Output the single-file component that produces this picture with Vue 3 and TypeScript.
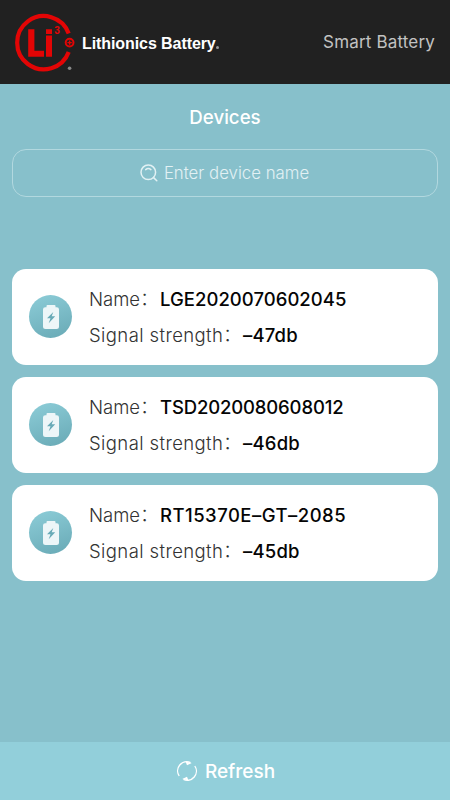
<script setup lang="ts">
import { ref, computed } from 'vue'

interface Device {
  name: string
  signal: string
  tracking: string
}

const query = ref('')
const devices = ref<Device[]>([
  { name: 'LGE2020070602045', signal: '–47db', tracking: '0.03px' },
  { name: 'TSD2020080608012', signal: '–46db', tracking: '-0.15px' },
  { name: 'RT15370E–GT–2085', signal: '–45db', tracking: '0.48px' },
])
const visible = computed(() =>
  devices.value.filter((d) => d.name.toLowerCase().includes(query.value.toLowerCase())),
)
</script>

<template>
  <div class="screen">
    <header class="topbar">
      <svg class="logo" width="64" height="64" viewBox="0 0 64 64">
        <path d="M53.7 20.4A26.6 26.6 0 1 0 53.7 39" fill="none" stroke="#e30505" stroke-width="4.2" />
        <path d="M13.2 16.2h6.2v21.6H29v6H13.2z" fill="#e30505" />
        <path d="M31 16.2h6v4.8h-6zM31 22.6h6v21.2h-6z" fill="#e30505" />
        <text class="cube" x="39.3" y="20.9">3</text>
        <circle cx="54.6" cy="29.6" r="3.9" fill="none" stroke="#e30505" stroke-width="2" />
        <path d="M52.4 29.6h4.4M54.6 27.4v4.4" stroke="#e30505" stroke-width="1.4" />
        <circle cx="54.6" cy="55.200" r="1.8" fill="#888" />
      </svg>
      <span class="brand">Lithionics Battery<i class="dot"></i></span>
      <span class="product">Smart Battery</span>
    </header>

    <main class="content">
      <h1 class="title">Devices</h1>
      <div class="search">
        <svg width="18" height="18" viewBox="0 0 18 18" fill="none" stroke="currentColor" stroke-width="1.5" stroke-linecap="round">
          <circle cx="8.3" cy="8.3" r="7.3" />
          <path d="M13.6 13.6l3.2 3.2M5.7 5.6q2.6-2.1 5.2 0" />
        </svg>
        <span class="placeholder">Enter device name</span>
      </div>

      <ul class="list">
        <li v-for="device in visible" :key="device.name" class="card">
          <span class="badge">
            <svg width="16" height="24" viewBox="0 0 16 24">
              <path d="M4.5 0h7q1 0 1 1v1.3h1.3Q16 2.3 16 4.5v17q0 2.5-2.5 2.5h-11Q0 24 0 21.5v-17q0-2.2 2.2-2.2h1.3V1q0-1 1-1z" fill="#edf6f8" />
              <path d="M10.3 7L4 13.2h3.5l-1.8 5 6.500-7H8.700z" fill="#68aab7" />
            </svg>
          </span>
          <div class="info">
            <p class="row">
              <span class="label name">Name</span><span class="colon">：</span><span class="value" :style="{ letterSpacing: device.tracking }">{{ device.name }}</span>
            </p>
            <p class="row">
              <span class="label signal">Signal strength</span><span class="colon">：</span><span class="value db">{{ device.signal }}</span>
            </p>
          </div>
        </li>
      </ul>
    </main>

    <footer class="refresh">
      <svg width="20" height="20" viewBox="0 0 20 20" fill="none" stroke="currentColor" stroke-width="1.3">
        <path d="M2.2 15A9.1 9.1 0 0 1 13.5 1.6M17.8 5A9.1 9.1 0 0 1 6.5 18.4" />
        <path d="M8.5.5l6.300 1.600L10 4.300zM11.500 19.500l-6.300-1.600L10 15.700z" fill="currentColor" stroke="none" />
      </svg>
      <span>Refresh</span>
    </footer>
  </div>
</template>

<style>
body {
  margin: 0;
}
</style>

<style scoped>
.screen {
  display: flex;
  flex-direction: column;
  width: 450px;
  height: 800px;
  overflow: hidden;
  background: #87c0cb;
  font-family: Inter, "Noto Sans CJK SC", sans-serif;
}
.topbar {
  display: flex;
  align-items: center;
  box-sizing: border-box;
  height: 84px;
  padding: 0 15px;
  background: #212121;
}
.logo {
  flex: none;
  margin-top: 6px;
}
.cube {
  font: bold 10px "Liberation Sans", sans-serif;
  fill: #e30505;
}
.brand {
  margin: 3px 0 0 3px;
  color: #fff;
  font: bold 16px/20px "Liberation Sans", sans-serif;
  letter-spacing: -0.08px;
  white-space: nowrap;
}
.dot {
  display: inline-block;
  width: 3px;
  height: 3px;
  border-radius: 50%;
  background: #999;
}
.product {
  margin-left: auto;
  color: #c2c2c2;
  font-size: 17px;
  letter-spacing: 0.17px;
  white-space: nowrap;
}
.content {
  flex: 1;
  padding: 0 12px;
}
.title {
  margin: 22px 0 19px;
  color: #fff;
  font-size: 18.7px;
  font-weight: 500;
  line-height: 24px;
  text-align: center;
}
.search {
  display: flex;
  align-items: center;
  justify-content: center;
  gap: 6px;
  box-sizing: border-box;
  height: 48px;
  padding-right: 1px;
  border: 1px solid #b2d8df;
  border-radius: 14px;
  color: #e2f1f4;
}
.placeholder {
  font-size: 16.8px;
  font-weight: 300;
}
.list {
  display: grid;
  gap: 12px;
  margin: 72px 0 0;
  padding: 0;
  list-style: none;
}
.card {
  display: flex;
  align-items: center;
  box-sizing: border-box;
  height: 96px;
  padding-left: 17px;
  border-radius: 14px;
  background: #fff;
}
.badge {
  display: flex;
  flex: none;
  align-items: center;
  justify-content: center;
  width: 43px;
  height: 43px;
  margin-bottom: 1px;
  border-radius: 50%;
  background: linear-gradient(160deg, #8dcdd8, #68a9b5);
}
.info {
  margin-left: 17px;
}
.row {
  display: flex;
  height: 36px;
  margin: 0;
  color: #050505;
  font-size: 18.5px;
  line-height: 36px;
  white-space: nowrap;
}
.label {
  color: #333;
  font-weight: 300;
}
.name {
  width: 51px;
}
.signal {
  width: 134px;
  letter-spacing: 0.4px;
}
.colon {
  width: 20px;
  height: 32px;
  color: #333;
  font-family: "Noto Sans CJK SC", sans-serif;
  font-weight: 300;
  line-height: 32px;
}
.value {
  font-weight: 500;
}
.db {
  letter-spacing: 0.2px;
}
.refresh {
  display: flex;
  align-items: center;
  justify-content: center;
  gap: 8px;
  height: 58px;
  padding-left: 2px;
  background: #92cfda;
  color: #fff;
  font-size: 19px;
  font-weight: 500;
}
</style>
